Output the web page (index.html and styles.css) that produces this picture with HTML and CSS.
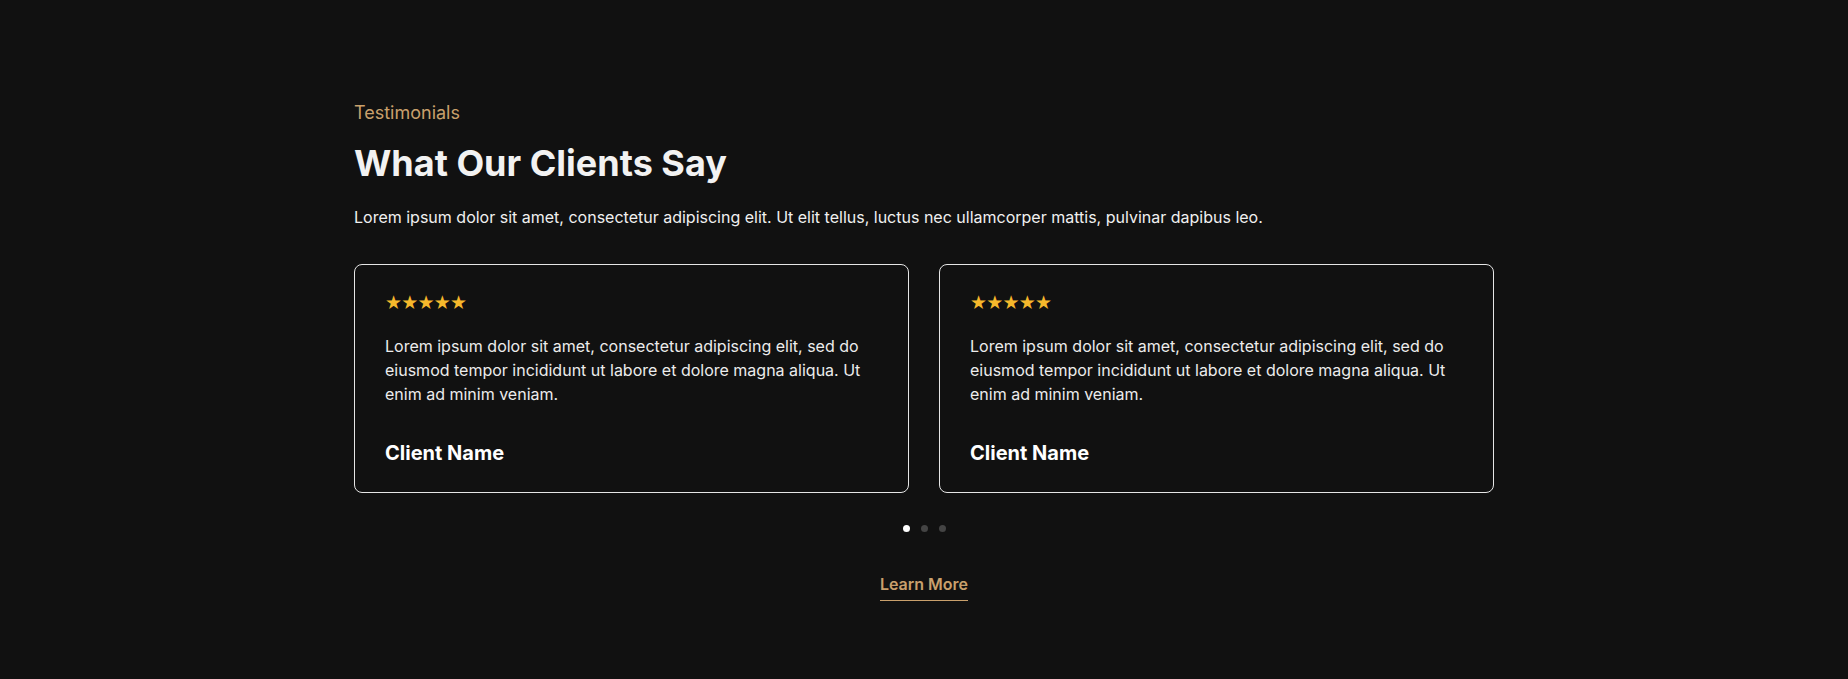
FILE: index.html
```html
<!DOCTYPE html>
<html lang="en">
<head>
<meta charset="utf-8">
<title>Testimonials</title>
<link rel="stylesheet" href="styles.css">
</head>
<body>
<section class="testimonials">
  <div class="container">
    <p class="eyebrow">Testimonials</p>
    <h2 class="title">What Our Clients Say</h2>
    <p class="intro">Lorem ipsum dolor sit amet, consectetur adipiscing elit. Ut elit tellus, luctus nec ullamcorper mattis, pulvinar dapibus leo.</p>
    <div class="cards">
      <article class="card">
        <div class="stars">★★★★★</div>
        <p class="quote">Lorem ipsum dolor sit amet, consectetur adipiscing elit, sed do eiusmod tempor incididunt ut labore et dolore magna aliqua. Ut enim ad minim veniam.</p>
        <h3 class="name">Client Name</h3>
      </article>
      <article class="card">
        <div class="stars">★★★★★</div>
        <p class="quote">Lorem ipsum dolor sit amet, consectetur adipiscing elit, sed do eiusmod tempor incididunt ut labore et dolore magna aliqua. Ut enim ad minim veniam.</p>
        <h3 class="name">Client Name</h3>
      </article>
    </div>
    <div class="dots">
      <span class="dot active"></span>
      <span class="dot"></span>
      <span class="dot"></span>
    </div>
    <div class="cta">
      <a class="learn" href="#">Learn More</a>
    </div>
  </div>
</section>
</body>
</html>
```

FILE: styles.css
```css
* { box-sizing: border-box; }
html, body { margin: 0; padding: 0; }
body {
  background: #111111;
  color: #f2f2f2;
  font-family: Inter, "Noto Sans", "Liberation Sans", sans-serif;
  height: 679px;
  overflow: hidden;
}
.testimonials { padding-top: 100px; }
.container { width: 1140px; margin: 0 auto; }
.eyebrow {
  margin: 0;
  font-size: 18px;
  line-height: 26px;
  color: #c9a06c;
  font-weight: 400;
}
.title {
  margin: 15px 0 0;
  font-size: 36px;
  line-height: 44px;
  font-weight: 700;
  color: #f2f2f2;
}
.intro {
  margin: 20px 0 0;
  font-size: 16px;
  line-height: 24px;
  color: #f0f0f0;
}
.cards {
  margin-top: 35px;
  display: grid;
  grid-template-columns: 1fr 1fr;
  gap: 30px;
}
.card {
  border: 1px solid #e6e6e6;
  border-radius: 8px;
  padding: 27px 30px 25px;
  background: #111111;
}
.stars {
  font-family: "DejaVu Sans", sans-serif;
  font-size: 19px;
  line-height: 20px;
  color: #f6b82c;
  letter-spacing: -0.8px;
}
.quote {
  margin: 22px 0 0;
  font-size: 16px;
  line-height: 24px;
  color: #ececec;
}
.name {
  margin: 33px 0 0;
  font-size: 20px;
  line-height: 28px;
  font-weight: 700;
  color: #ffffff;
}
.dots {
  margin-top: 32px;
  display: flex;
  justify-content: center;
  gap: 11px;
  height: 7px;
}
.dot {
  width: 7px;
  height: 7px;
  border-radius: 50%;
  background: #444444;
}
.dot.active { background: #ffffff; }
.cta {
  margin-top: 40px;
  display: flex;
  justify-content: center;
}
.learn {
  font-size: 16px;
  line-height: 24px;
  font-weight: 600;
  color: #c9a06c;
  text-decoration: none;
  border-bottom: 1px solid #c9a06c;
  padding-bottom: 4px;
}
```
